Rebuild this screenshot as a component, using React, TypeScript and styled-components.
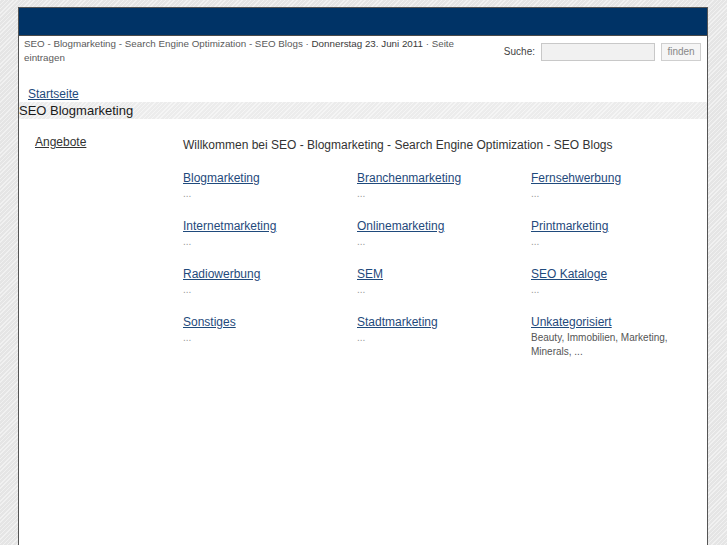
import styled, { createGlobalStyle } from 'styled-components'

const GlobalStyle = createGlobalStyle`
    html, body {
        margin: 0;
        padding: 0;
    }
    body {
        font-family: "Liberation Sans", Arial, sans-serif;
        background-color: #ebebeb;
        background-image: repeating-linear-gradient(
            135deg,
            #f1f1f1 0px,
            #f1f1f1 1px,
            #e5e5e5 1px,
            #e5e5e5 3px
        );
        min-height: 100vh;
    }
`

const Page = styled.div`
    width: 688px;
    min-height: 538px;
    margin: 7px 0 0 18px;
    border: 1px solid #555;
    border-bottom: none;
    background: #fff;
`

const Header = styled.div`
    height: 27px;
    background: #003366;
    border-bottom: 1px solid #4a4a4a;
`

const TopBar = styled.div`
    display: flex;
    justify-content: space-between;
    align-items: flex-start;
    padding: 1px 6px 0 5px;
`

const Info = styled.div`
    width: 470px;
    font-size: 9.8px;
    line-height: 14px;
    color: #5a5a5a;
`

const Date = styled.span`
    color: #3a3a3a;
`

const Search = styled.form`
    display: flex;
    align-items: center;
    margin-top: 5px;
    font-size: 10px;
    color: #444;
`

const SearchLabel = styled.label`
    margin-right: 6px;
`

const SearchInput = styled.input`
    box-sizing: border-box;
    width: 114px;
    height: 18px;
    margin: 1px 6px 0 0;
    border: 1px solid #c8c8c8;
    background: #f1f1f1;
    padding: 0 3px;
`

const SearchButton = styled.button`
    box-sizing: border-box;
    width: 40px;
    height: 18px;
    padding: 0;
    border: 1px solid #cfcfcf;
    background: #f5f5f5;
    color: #888;
    font-family: "Liberation Sans", Arial, sans-serif;
    font-size: 10px;
`

const Crumbs = styled.div`
    padding: 22px 0 1px 9px;
    font-size: 12px;
    line-height: 14px;
`

const Link = styled.a`
    color: #1f4a7c;
    text-decoration: underline;
`

const Band = styled.div`
    height: 17px;
    line-height: 17px;
    font-size: 13px;
    color: #1a1a1a;
    background-color: #f0f0f0;
    background-image: repeating-linear-gradient(
        135deg,
        #f5f5f5 0px,
        #f5f5f5 1px,
        #ececec 1px,
        #ececec 3px
    );
`

const Body = styled.div`
    display: grid;
    grid-template-columns: 164px 1fr;
    padding-top: 16px;
`

const Sidebar = styled.div`
    padding-left: 16px;
    font-size: 12px;
    line-height: 14px;
`

const SideLink = styled.a`
    color: #333;
    text-decoration: underline;
`

const Main = styled.div`
    padding-top: 3px;
    font-size: 12px;
    line-height: 14px;
    color: #333;
`

const Welcome = styled.p`
    margin: 0 0 19px;
`

const Grid = styled.div`
    display: grid;
    grid-template-columns: repeat(3, 174px);
    grid-auto-rows: 48px;
`

const Cell = styled.div`
    display: flex;
    flex-direction: column;
`

const Sub = styled.div<{ $dots?: boolean }>`
    margin-top: 2px;
    font-size: 10px;
    line-height: 14px;
    color: ${p => (p.$dots ? '#999' : '#555')};
    width: 140px;
`

const categories: [string, string][] = [
    ['Blogmarketing', '...'],
    ['Branchenmarketing', '...'],
    ['Fernsehwerbung', '...'],
    ['Internetmarketing', '...'],
    ['Onlinemarketing', '...'],
    ['Printmarketing', '...'],
    ['Radiowerbung', '...'],
    ['SEM', '...'],
    ['SEO Kataloge', '...'],
    ['Sonstiges', '...'],
    ['Stadtmarketing', '...'],
    ['Unkategorisiert', 'Beauty, Immobilien, Marketing, Minerals, ...']
]

function App () {
    return (
        <>
            <GlobalStyle />
            <Page>
                <Header />
                <TopBar>
                    <Info>
                        SEO - Blogmarketing - Search Engine Optimization - SEO Blogs ·{' '}
                        <Date>Donnerstag 23. Juni 2011</Date> · Seite eintragen
                    </Info>
                    <Search onSubmit={e => e.preventDefault()}>
                        <SearchLabel>Suche:</SearchLabel>
                        <SearchInput type='text' />
                        <SearchButton>finden</SearchButton>
                    </Search>
                </TopBar>
                <Crumbs>
                    <Link href='#'>Startseite</Link>
                </Crumbs>
                <Band>SEO Blogmarketing</Band>
                <Body>
                    <Sidebar>
                        <SideLink href='#'>Angebote</SideLink>
                    </Sidebar>
                    <Main>
                        <Welcome>
                            Willkommen bei SEO - Blogmarketing - Search Engine Optimization - SEO Blogs
                        </Welcome>
                        <Grid>
                            {categories.map(([name, sub]) => (
                                <Cell key={name}>
                                    <div>
                                        <Link href='#'>{name}</Link>
                                    </div>
                                    <Sub $dots={sub === '...'}>{sub}</Sub>
                                </Cell>
                            ))}
                        </Grid>
                    </Main>
                </Body>
            </Page>
        </>
    )
}

export default App
